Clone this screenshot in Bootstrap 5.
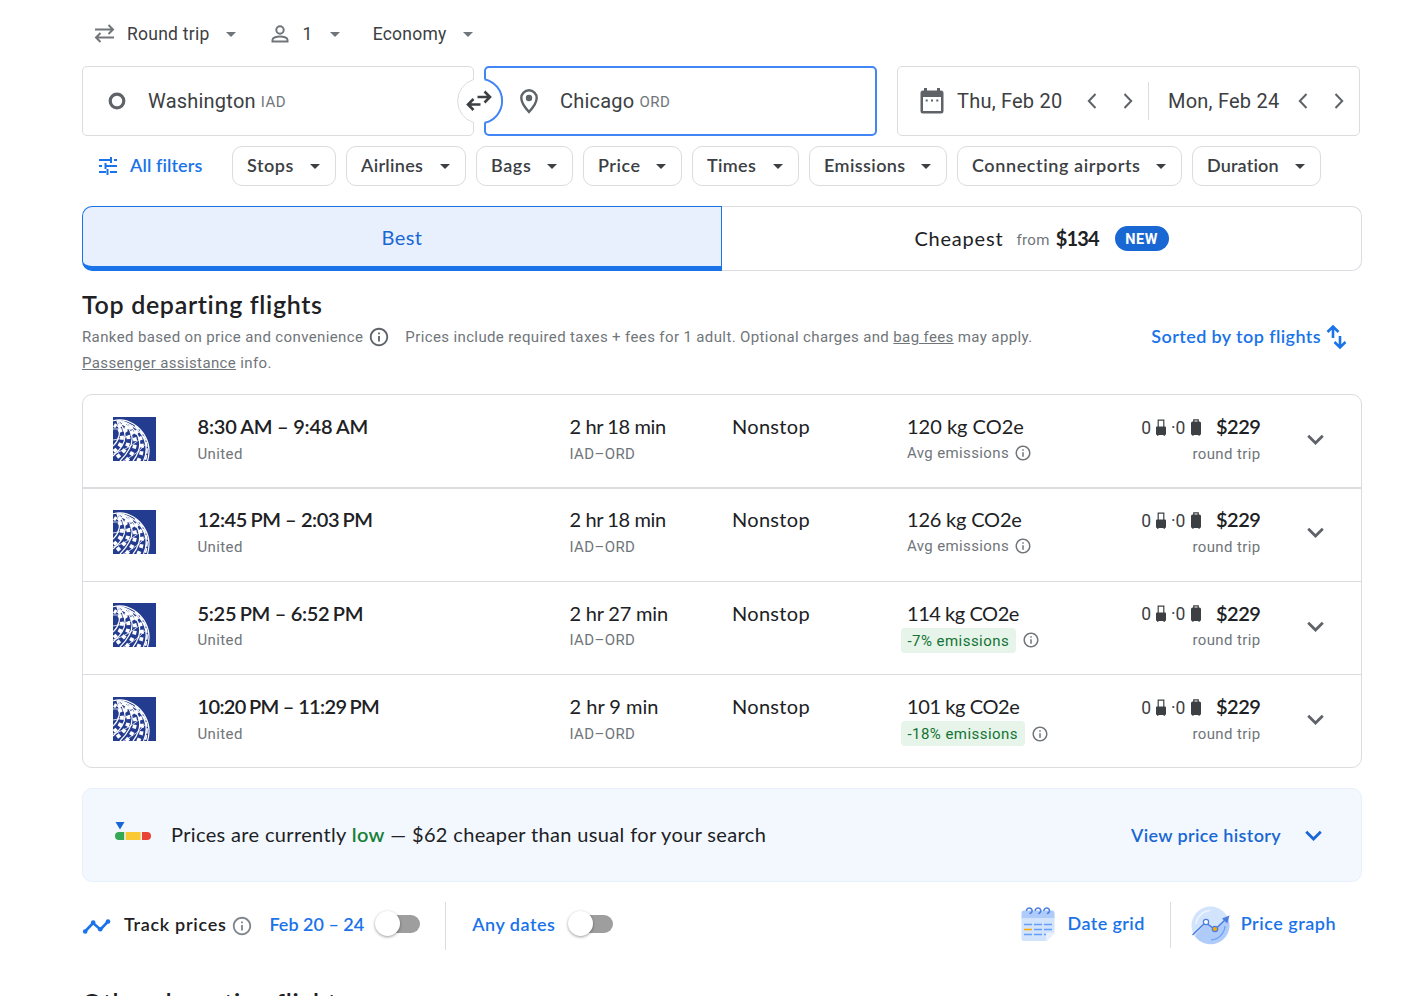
<!DOCTYPE html>
<html lang="en">
<head>
<meta charset="utf-8">
<meta name="viewport" content="width=device-width, initial-scale=1">
<title>Flights: Washington to Chicago</title>
<link rel="stylesheet" href="https://cdn.jsdelivr.net/npm/bootstrap@5.3.0/dist/css/bootstrap.min.css">
<style>
  body { font-family: Roboto, "Liberation Sans", sans-serif; font-size: 15px; color: #3c4043; background: #fff; height: 996px; overflow: hidden; }
  svg { display: block; flex: none; }
  .page { width: 1280px; margin-left: 82px; }
  .disp-20 { font-family: Lato, "Open Sans", sans-serif; font-size: 20px; line-height: 26px; color: #202124; }
  .btn-label { font-family: Lato, "Open Sans", sans-serif; font-size: 18px; font-weight: 600; line-height: 24px; }
  .med { font-weight: 600; }
  .sub { font-size: 15px; letter-spacing: .375px; line-height: 20px; color: #70757a; }
  .blue { color: #1a73e8; }
  .deep { color: #1967d2; }
  /* tracking steps, in hundredths of a pixel */
  .ls-n85 { letter-spacing: -.9px } .ls-n60 { letter-spacing: -.65px } .ls-n45 { letter-spacing: -.45px }
  .ls-n40 { letter-spacing: -.4px } .ls-n20 { letter-spacing: -.2px } .ls-n30 { letter-spacing: -.3px }
  .ls-10 { letter-spacing: .1px } .ls-15 { letter-spacing: .15px } .ls-30 { letter-spacing: .3px } .ls-35 { letter-spacing: .35px }
  .ls-40 { letter-spacing: .4px } .ls-50 { letter-spacing: .5px } .ls-55 { letter-spacing: .55px }
  .ls-60 { letter-spacing: .6px } .ls-70 { letter-spacing: .7px } .ls-80 { letter-spacing: .8px }
  .thin { word-spacing: -1.2px; }

  .options { height: 66px; padding: 2px 0 0 12px; font-size: 17.5px; letter-spacing: .25px; }
  .tri { width: 0; height: 0; border: 5.5px solid transparent; border-top-color: currentColor; border-bottom: 0; flex: none; }
  .options .tri { color: #70757a; margin-left: 16px; }
  .traveler { margin-left: 35px; } .opt-num { margin-left: 14px; } .opt-num + .tri { margin-left: 17px !important; } .opt-cabin { margin-left: 33px; }

  .search { height: 70px; }
  .field { height: 70px; border: 1px solid #dadce0; border-radius: 5px; font-size: 20px; letter-spacing: .22px; }
  .field-from { width: 392px; padding-left: 25px; margin-right: 10px; }
  .field-to { width: 393px; border: 2px solid #4285f4; padding-left: 34px; margin-right: 20px; }
  .field-dates { width: 463px; padding-left: 22px; }
  .place { margin-left: 22px; }
  .code { font-size: 15px; letter-spacing: .45px; color: #70757a; margin-left: 5px; padding-top: 3px; }
  .swap { left: 374px; top: 11px; z-index: 2; }
  .date-a { margin-left: 13px; width: 130px; } .date-b { margin-left: 19px; width: 130px; }
  .gap-arrow { margin-left: 26px; }
  .date-rule { width: 1px; height: 38px; background: #dadce0; margin-left: 15px; }

  .filters { height: 40px; margin-top: 10px; }
  .all-filters { width: 150px; padding: 0 0 2px 16px; }
  .all-filters span { margin-left: 12px; }
  .all-filters svg { margin-top: 2px; }
  .chip { height: 40px; border: 1px solid #dadce0; border-radius: 10px; padding: 0 15px 2px 14px; margin-right: 10px; color: #3c4043; }
  .chip .tri { margin-top: 2px; }
  .w-a { width: 104px } .w-b { width: 120px } .w-c { width: 97px } .w-d { width: 99px }
  .w-e { width: 107px } .w-f { width: 138px } .w-g { width: 225px } .w-h { width: 129px }

  .sort-tabs { margin-top: 20px; height: 65px; }
  .tab-best { width: 640px; border: 1px solid #1a73e8; border-bottom-width: 5px; border-radius: 10px 0 0 10px; background: #e8f0fe; padding-top: 1px; }
  .tab-cheap { width: 640px; border: 1px solid #dadce0; border-left: 0; border-radius: 0 10px 10px 0; }
  .tab-cheap .disp-20 { margin-top: -2px; }
  .tab-from { margin: 2px 6px 0 13px; }
  .pill-new { background: #1967d2; color: #fff; font-size: 14.5px; font-weight: 700; letter-spacing: .6px; width: 54px; height: 25px; border-radius: 13px; margin-left: 16px; padding-top: 3px; }

  .heading { font-family: Lato, "Open Sans", sans-serif; font-size: 25px; font-weight: 600; line-height: 32px; color: #202124; letter-spacing: .67px; }
  .top-head { margin-top: 17px; }
  .intro { line-height: 26px; margin-top: 4px; }
  .intro svg { display: inline-block; margin: -3px 15px 0 1px; }
  .intro a { color: inherit; }
  .sorted { margin: 52px 15px 0 0; height: 26px; } .sorted svg { margin: 2px 0 0 5px; }

  .flights { margin-top: 18px; border: 1px solid #dadce0; border-radius: 10px; height: 374px; }
  .flight { display: grid; grid-template-columns: 84.5px 372px 162.5px 175px 1fr 100.5px; padding: 20px 0 0 30px; height: 93px; border-bottom: 1px solid #dadce0; }
  .flight:first-child { height: 94px; border-bottom-width: 2px; }
  .flight:nth-child(2), .flight:nth-child(3) { padding-top: 19px; }
  .flight:last-child { height: 92px; border-bottom: 0; }
  .flight .disp-20 { line-height: 22px; }
  .flight:nth-child(3) .disp-20 { line-height: 20px; padding-top: 2px; }
  .flight .logo { margin-top: 2px; }
  .flight .sub { margin-top: 7px; }
  .flight .emis { margin-top: 6px; }
  .mini { margin-left: 5px; }
  .fare { height: 26px; }
  .fare .disp-20 { margin-top: -4px; }
  .fare + .sub { margin-top: 3px !important; }
  .fare svg { margin-top: -2px; }
  .bag-count { font-size: 17.5px; letter-spacing: 0; }
  .bag-a { margin: 0 5px 0 5px; } .bag-b { margin: 0 15px 0 5.500px; }
  .open { margin: 8px 0 0 38.500px; }
  .flight:nth-child(3) .open { margin-top: 9px; }
  .eco { background: #e6f4ea; color: #137333; border-radius: 4px; height: 25px; margin: 5px 6px 0 -6px; padding: 3px 7px 0 6.5px; font-size: 15px; line-height: 20px; letter-spacing: .45px; }
  .flight:last-child .eco { margin-top: 4px; }

  .insight { margin-top: 20px; height: 94px; background: #f3f8ff; border: 1px solid #e8f0fe; border-radius: 10px; padding: 0 31px 0 32px; }
  .low { color: #188038; }
  .gauge { margin-top: -8px; } .insight-text { margin: -3px 0 0 20px; }
  .hist { margin: 0 0 0 16px; }
  .insight .btn-label { margin-top: -1px; }
  .track { height: 48px; margin-top: 20px; }
  .track > span:not(.toggle):not(.rule) { margin-top: -4px; }
  .rule { width: 1px; background: #dadce0; }
  .tp { margin-left: 13px; color: #202124; } .tp-info { margin: 0 16px 0 5px; }
  .toggle { width: 45px; height: 26px; margin: -4px 0 0 11px; }
  .toggle + .rule-a { margin-left: 25px; }
  .dates + .toggle { margin-left: 13px; }
  .toggle .slot { left: 4px; top: 4px; width: 41px; height: 18px; border-radius: 9px; background: #9e9e9e; }
  .toggle .knob { left: 0; top: 0; width: 25px; height: 25px; border-radius: 50%; background: #fff; box-shadow: 0 1px 3px rgba(0,0,0,.4); }
  .rule-a { height: 48px; margin: 0 26px 0 25px; }
  .grid-ico { margin-top: -3px; } .pg { margin-top: -2px; }
  .dg { margin-left: 13px; } .rule-b { height: 46px; margin: -2px 20.500px 0 25px; } .pgl { margin: 0 26px 0 10.500px; }
  .track > .dg, .track > .pgl { margin-top: -6px !important; }
  .other-head { margin-top: 36px; }
</style>
</head>
<body>
<svg width="0" height="0" class="position-absolute">
  <defs>
    <symbol id="info" viewBox="0 0 24 24"><path fill="currentColor" d="M11 7h2v2h-2zm0 4h2v6h-2zm1-9C6.480 2 2 6.480 2 12s4.480 10 10 10 10-4.480 10-10S17.520 2 12 2zm0 18c-4.410 0-8-3.590-8-8s3.590-8 8-8 8 3.590 8 8-3.590 8-8 8z"/></symbol>
    <symbol id="chev" viewBox="0 0 24 24"><path fill="currentColor" d="M7.410 8.590 12 13.170l4.590-4.580L18 10l-6 6-6-6z"/></symbol>
    <symbol id="left" viewBox="0 0 10 16"><path d="M8.500 1 1.800 8l6.700 7" fill="none" stroke="#5f6368" stroke-width="2"/></symbol>
    <symbol id="right" viewBox="0 0 10 16"><path d="M1.500 1l6.700 7-6.700 7" fill="none" stroke="#5f6368" stroke-width="2"/></symbol>
    <symbol id="carry" viewBox="0 0 10 17"><path d="M2.200 9V1.200h5.600V9" fill="none" stroke="#3c4043" stroke-width="1.200"/><path fill="#3c4043" d="M0 8.600q0-1 1-1h8q1 0 1 1V15q0 1-1 1v.8H7.500V16h-5v.8H1V16q-1 0-1-1z"/></symbol>
    <symbol id="case" viewBox="0 0 10 17"><path d="M2.800 3V.9h4.400V3" fill="none" stroke="#3c4043" stroke-width="1.300"/><path fill="#3c4043" d="M0 4q0-1.600 1.600-1.600h6.800Q10 2.400 10 4v10.500q0 1.500-1.200 1.500v.8H7.400V16H2.600v.8H1.200V16Q0 16 0 14.500z"/></symbol>
    <symbol id="globe" viewBox="0 0 44 44">
      <path fill="#243c8f" d="M0 0h44v44H0z"/>
      <g fill="none" stroke="#fff">
        <path stroke-width="1.200" d="M0 3.800C6 2 14 3 20.500 7 31 13.500 36.500 25 36 35q-.3 5-1.500 9"/>
        <g stroke-width="1.200">
          <path d="M7 3.500C19 7 28 14 31.500 23c2.500 7 2.200 14-1 21"/>
          <path d="M6 3.500C15 6 23 13 25.800 21c2.500 8-.5 16-5.800 23"/>
          <path d="M5 3.500C13 7 18 13 19 20c1 9-5 17-12 24"/>
          <path d="M4 3.500C9 8 12 13 12 19c0 8-6 15-12 20"/>
          <path d="M4 3.500C6 9 7 14 6 19q-1.500 6-6 10"/>
        </g>
        <g stroke-width="3.800" stroke-dasharray="3.800 3.600">
          <path d="M12 5.500C22 10 28.500 15.500 30.800 24c1.700 7 0 14-3.300 20" transform="translate(-2.500 .5)"/>
          <path d="M10 7C18 11 22.500 16 23.500 23c.8 8-3.500 15-9 21" transform="translate(-1.500 0)" stroke-dashoffset="3"/>
          <path d="M5 7.500c7 3 12 8 12 15C17 31 10 37 3 42" transform="translate(-1.500 0)" stroke-dashoffset="6"/>
          <path d="M2 8c5 3 8 7 8 12.500C10 28 5 32 0 36" transform="translate(-1 0)" stroke-dashoffset="1"/>
        </g>
        <path stroke-width="1.600" stroke-dasharray="5 1.500" d="M22 9C30 15 34.500 25 34 34q-.5 6-1.800 10"/>
        <path stroke-width=".8" d="M0 12h11q7-.5 9-4M0 23q16-2 26-10M0 37c10-3 22-10 30.500-18M10 44c10-5 18-11 23.500-18"/>
      </g>
    </symbol>
  </defs>
</svg>

<main class="page">
  <div class="options d-flex align-items-center">
    <svg width="21" height="20" viewBox="0 0 21 20" fill="none" stroke="#70757a" stroke-width="2"><path d="M1 5.500h18M14.500 1 19 5.500 14.500 10M20 13.500H2M6.500 9 2 13.500 6.500 18"/></svg>
    <span class="ms-2 ps-1">Round trip</span><span class="tri"></span>
    <svg class="traveler" width="18" height="18" viewBox="0 0 18 18" fill="none" stroke="#70757a" stroke-width="2"><circle cx="9" cy="5" r="3.700"/><path d="M1.500 16.500v-1.700c0-2.200 4.300-3.400 7.500-3.400s7.500 1.200 7.500 3.400v1.700z"/></svg>
    <span class="opt-num">1</span><span class="tri"></span>
    <span class="opt-cabin">Economy</span><span class="tri"></span>
  </div>

  <div class="search d-flex position-relative">
    <div class="field field-from d-flex align-items-center">
      <svg width="18" height="18" viewBox="0 0 18 18"><circle cx="9" cy="9" r="6.800" fill="none" stroke="#5f6368" stroke-width="3.200"/></svg>
      <span class="place">Washington</span><span class="code">IAD</span>
    </div>
    <svg class="swap position-absolute" width="48" height="48" viewBox="0 0 48 48">
      <circle cx="24" cy="24" r="22.500" fill="#fff"/>
      <path d="M17.500 2.500a22.500 22.500 0 0 0 0 43" fill="none" stroke="#dadce0"/>
      <path d="M28.500 2.200a22.300 22.300 0 0 1 0 43.600" fill="none" stroke="#4285f4" stroke-width="2"/>
      <path d="M21.500 20h12M28.500 14.500l5.500 5.500-5.500 5.500M24.500 27.500h-12M17.500 22l-5.500 5.500 5.500 5.500" fill="none" stroke="#3c4043" stroke-width="2.600"/>
    </svg>
    <div class="field field-to d-flex align-items-center">
      <svg width="18" height="25" viewBox="0 0 18 25"><path d="M9 1.300C4.700 1.300 1.300 4.700 1.300 9c0 5.500 7.700 14 7.700 14s7.700-8.500 7.700-14c0-4.300-3.400-7.700-7.700-7.700z" fill="none" stroke="#5f6368" stroke-width="2.400"/><circle cx="9" cy="9" r="3.200" fill="#5f6368"/></svg>
      <span class="place">Chicago</span><span class="code">ORD</span>
    </div>
    <div class="field field-dates d-flex align-items-center">
      <svg width="24" height="26" viewBox="0 0 24 26"><path fill="#5f6368" fill-rule="evenodd" d="M4 0h3v2.500h10V0h3v2.500h1q2.500 0 2.500 2.500v18q0 2.500-2.500 2.500H3Q.5 25.500.5 23V5Q.5 2.500 3 2.500h1zM3 9v14h18V9z"/><path fill="#5f6368" d="M5.700 11.500h2v2h-2zm5.300 0h2v2h-2zm5.300 0h2v2h-2z"/></svg>
      <span class="date-a">Thu, Feb 20</span>
      <svg width="10" height="16"><use href="#left"/></svg>
      <svg class="gap-arrow" width="10" height="16"><use href="#right"/></svg>
      <span class="date-rule"></span>
      <span class="date-b">Mon, Feb 24</span>
      <svg width="10" height="16"><use href="#left"/></svg>
      <svg class="gap-arrow" width="10" height="16"><use href="#right"/></svg>
    </div>
  </div>

  <div class="filters d-flex btn-label">
    <div class="all-filters d-flex align-items-center blue">
      <svg width="20" height="18" viewBox="0 0 20 18" fill="none" stroke="#1a73e8" stroke-width="2"><path d="M1 3h11M16 3h3M13 0v6M1 9h3M8.500 9H19M7.500 6v6M1 15h7M12 15h7M9.500 12v6"/></svg>
      <span class="ls-10">All filters</span>
    </div>
    <div class="chip w-a d-flex align-items-center justify-content-between"><span class="ls-55">Stops</span><i class="tri"></i></div>
    <div class="chip w-b d-flex align-items-center justify-content-between"><span class="ls-30">Airlines</span><i class="tri"></i></div>
    <div class="chip w-c d-flex align-items-center justify-content-between"><span class="ls-60">Bags</span><i class="tri"></i></div>
    <div class="chip w-d d-flex align-items-center justify-content-between"><span class="ls-50">Price</span><i class="tri"></i></div>
    <div class="chip w-e d-flex align-items-center justify-content-between"><span class="ls-35">Times</span><i class="tri"></i></div>
    <div class="chip w-f d-flex align-items-center justify-content-between"><span class="ls-40">Emissions</span><i class="tri"></i></div>
    <div class="chip w-g d-flex align-items-center justify-content-between"><span class="ls-60">Connecting airports</span><i class="tri"></i></div>
    <div class="chip w-h d-flex align-items-center justify-content-between"><span class="ls-15">Duration</span><i class="tri"></i></div>
  </div>

  <div class="sort-tabs d-flex">
    <div class="tab-best d-flex align-items-center justify-content-center"><span class="disp-20 deep ls-40">Best</span></div>
    <div class="tab-cheap d-flex align-items-center justify-content-center">
      <span class="disp-20 ls-80">Cheapest</span>
      <span class="sub tab-from">from</span>
      <span class="disp-20 fw-bold ls-n85">$134</span>
      <span class="pill-new d-flex align-items-center justify-content-center">NEW</span>
    </div>
  </div>

  <div class="d-flex justify-content-between">
    <div>
      <h1 class="heading mb-0 top-head">Top departing flights</h1>
      <div class="sub intro">Ranked based on price and convenience <svg width="22" height="22" color="#5f6368"><use href="#info"/></svg>Prices include required taxes + fees for 1 adult. Optional charges and <a href="#">bag fees</a> may apply.<br><a href="#">Passenger assistance</a> info.</div>
    </div>
    <div class="sorted d-flex align-items-center btn-label blue">
      <span class="ls-40">Sorted by top flights</span>
      <svg width="21" height="26" viewBox="0 0 21 26" fill="none" stroke="#1a73e8" stroke-width="2.600"><path d="M7 14V3M1.500 8 7 2.500 12.500 8M14 12v11M8.500 18l5.500 5.500L19.500 18"/></svg>
    </div>
  </div>

  <div class="flights" id="flights"></div>

  <div class="insight d-flex align-items-center">
    <svg class="gauge" width="36" height="19" viewBox="0 0 36 19"><path fill="#1967d2" d="M.5 0h9L5 7.500z"/><path fill="#34a853" d="M4 10h5.200v8H4a4 4 0 0 1 0-8z"/><path fill="#fbc934" d="M10.600 10h15v8h-15z"/><path fill="#ea4335" d="M27 10h5a4 4 0 0 1 0 8h-5z"/></svg>
    <span class="disp-20 ls-35 insight-text">Prices are currently <span class="low med">low</span> — $62 cheaper than usual for your search</span>
    <span class="btn-label deep ls-35 ms-auto">View price history</span>
    <svg class="hist" width="33" height="33" color="#1967d2"><use href="#chev"/></svg>
  </div>

  <div class="track d-flex align-items-center btn-label">
    <svg width="29" height="17" viewBox="0 0 29 17"><path d="M3 13.500 11 5l7.500 6.500L26 3.500" fill="none" stroke="#1a73e8" stroke-width="2.600"/><g fill="#1a73e8"><circle cx="3.200" cy="13.500" r="2.300"/><circle cx="11.200" cy="4.500" r="2.300"/><circle cx="18.200" cy="11.200" r="2.300"/><circle cx="26" cy="3.500" r="2.300"/></g></svg>
    <span class="tp ls-70">Track prices</span>
    <svg class="tp-info" width="22" height="22" color="#80868b"><use href="#info"/></svg>
    <span class="blue">Feb 20 – 24</span>
    <span class="toggle position-relative"><span class="slot position-absolute"></span><span class="knob position-absolute"></span></span>
    <span class="rule rule-a"></span>
    <span class="blue ls-50 dates">Any dates</span>
    <span class="toggle position-relative"><span class="slot position-absolute"></span><span class="knob position-absolute"></span></span>
    <svg class="grid-ico ms-auto" width="34" height="35" viewBox="0 0 34 35"><path fill="#aecbfa" d="M.5 12V6q0-2.500 2.500-2.500h28q2.500 0 2.500 2.500v6z"/><path fill="#d2e3fc" d="M.5 11h33v15l-8 8H3Q.5 34 .5 31.500z"/><path fill="#e8f0fe" d="M33.500 25.500 25 34v-6q0-2.500 2.500-2.500z"/><g fill="none" stroke="#4c7ee0" stroke-width="1.500"><path d="M5.500 4a2.800 2.800 0 1 1 3 2.500M14.200 4a2.800 2.800 0 1 1 3 2.500M22.900 4a2.800 2.800 0 1 1 3 2.500"/></g><path d="M3 17.500h8M13 17.500h8M23 17.500h8M13 22.500h8M23 22.500h8M3 27.500h8M13 27.500h8M23 27.500h2" stroke="#669df6" stroke-width="1.500"/><path d="M3 22.500h8" stroke="#f9ab00" stroke-width="1.500"/></svg>
    <span class="blue ls-40 dg">Date grid</span>
    <span class="rule rule-b"></span>
    <svg class="pg" width="39" height="39" viewBox="0 0 39 39"><circle cx="19.500" cy="19.500" r="19" fill="#d2e3fc"/><path fill="#aecbfa" d="M4 30 15 17l9 7 12-13q2.500 4 2.500 8.500a19 19 0 0 1-34.500 10.500z"/><path d="M5 18A15 15 0 0 1 19 4.500" fill="none" stroke="#f1f6fe" stroke-width="1.500"/><path d="M34 20a15 15 0 0 1-14 14" fill="none" stroke="#669df6" stroke-width="1.200"/><path d="M1.500 29 14.500 16.500l9.500 7L36 12" fill="none" stroke="#4c7ee0" stroke-width="1.500"/><path fill="#4c7ee0" d="M38.500 9.500 31 12.500l5.300 5z"/><circle cx="15" cy="16" r="2.600" fill="#fff" stroke="#4c7ee0" stroke-width="1.200"/><circle cx="24" cy="23" r="2.700" fill="#f9ab00" stroke="#4c7ee0" stroke-width="1.200"/></svg>
    <span class="blue ls-50 pgl">Price graph</span>
  </div>

  <h2 class="heading mb-0 other-head">Other departing flights</h2>
</main>
<script>
  // each entry: [departure, arrival, tracking], [duration, tracking], [emissions, tracking], comparison badge
  const thin = '<span class="thin"> </span>';
  const flights = [
    [['8:30 AM', '9:48 AM', 'ls-n20'], ['2 hr 18 min', 'ls-n40'], ['120 kg CO2e', ''], null],
    [['12:45 PM', '2:03 PM', 'ls-n40'], ['2 hr 18 min', 'ls-n40'], ['126 kg CO2e', 'ls-n20'], null],
    [['5:25 PM', '6:52 PM', 'ls-n30'], ['2 hr 27 min', 'ls-n20'], ['114 kg CO2e', 'ls-n45'], '-7% emissions'],
    [['10:20 PM', '11:29 PM', 'ls-n60'], ['2 hr 9 min', ''], ['101 kg CO2e', 'ls-n40'], '-18% emissions']
  ];
  document.getElementById('flights').innerHTML = flights.map(([time, dur, co2, badge]) => `
    <div class="flight">
      <svg class="logo" width="43" height="44" viewBox="0 0 43 44"><use href="#globe" width="44" height="44"/></svg>
      <div><div class="disp-20 med ${time[2]}">${time[0].replace(' ', thin)} – ${time[1].replace(' ', thin)}</div><div class="sub">United</div></div>
      <div><div class="disp-20 ${dur[1]}">${dur[0]}</div><div class="sub">IAD–ORD</div></div>
      <div class="disp-20 ls-30">Nonstop</div>
      <div class="d-flex justify-content-between">
        <div><div class="disp-20 ${co2[1]}">${co2[0]}</div>${badge
          ? `<div class="d-flex align-items-center"><span class="eco">${badge}</span><svg class="mt-1" width="18" height="18" color="#70757a"><use href="#info"/></svg></div>`
          : `<div class="sub emis d-flex align-items-center">Avg emissions<svg class="mini" width="18" height="18"><use href="#info"/></svg></div>`}</div>
        <div class="text-end"><div class="fare d-flex align-items-center justify-content-end"><span class="bag-count">0</span><svg class="bag-a" width="10" height="17"><use href="#carry"/></svg><span class="bag-count">·0</span><svg class="bag-b" width="10" height="17"><use href="#case"/></svg><span class="disp-20 med ls-n45">$229</span></div><div class="sub">round trip</div></div>
      </div>
      <svg class="open" width="33" height="33" color="#5f6368"><use href="#chev"/></svg>
    </div>`).join('');
</script>
<script src="https://cdn.jsdelivr.net/npm/bootstrap@5.3.0/dist/js/bootstrap.bundle.min.js"></script>
</body>
</html>
